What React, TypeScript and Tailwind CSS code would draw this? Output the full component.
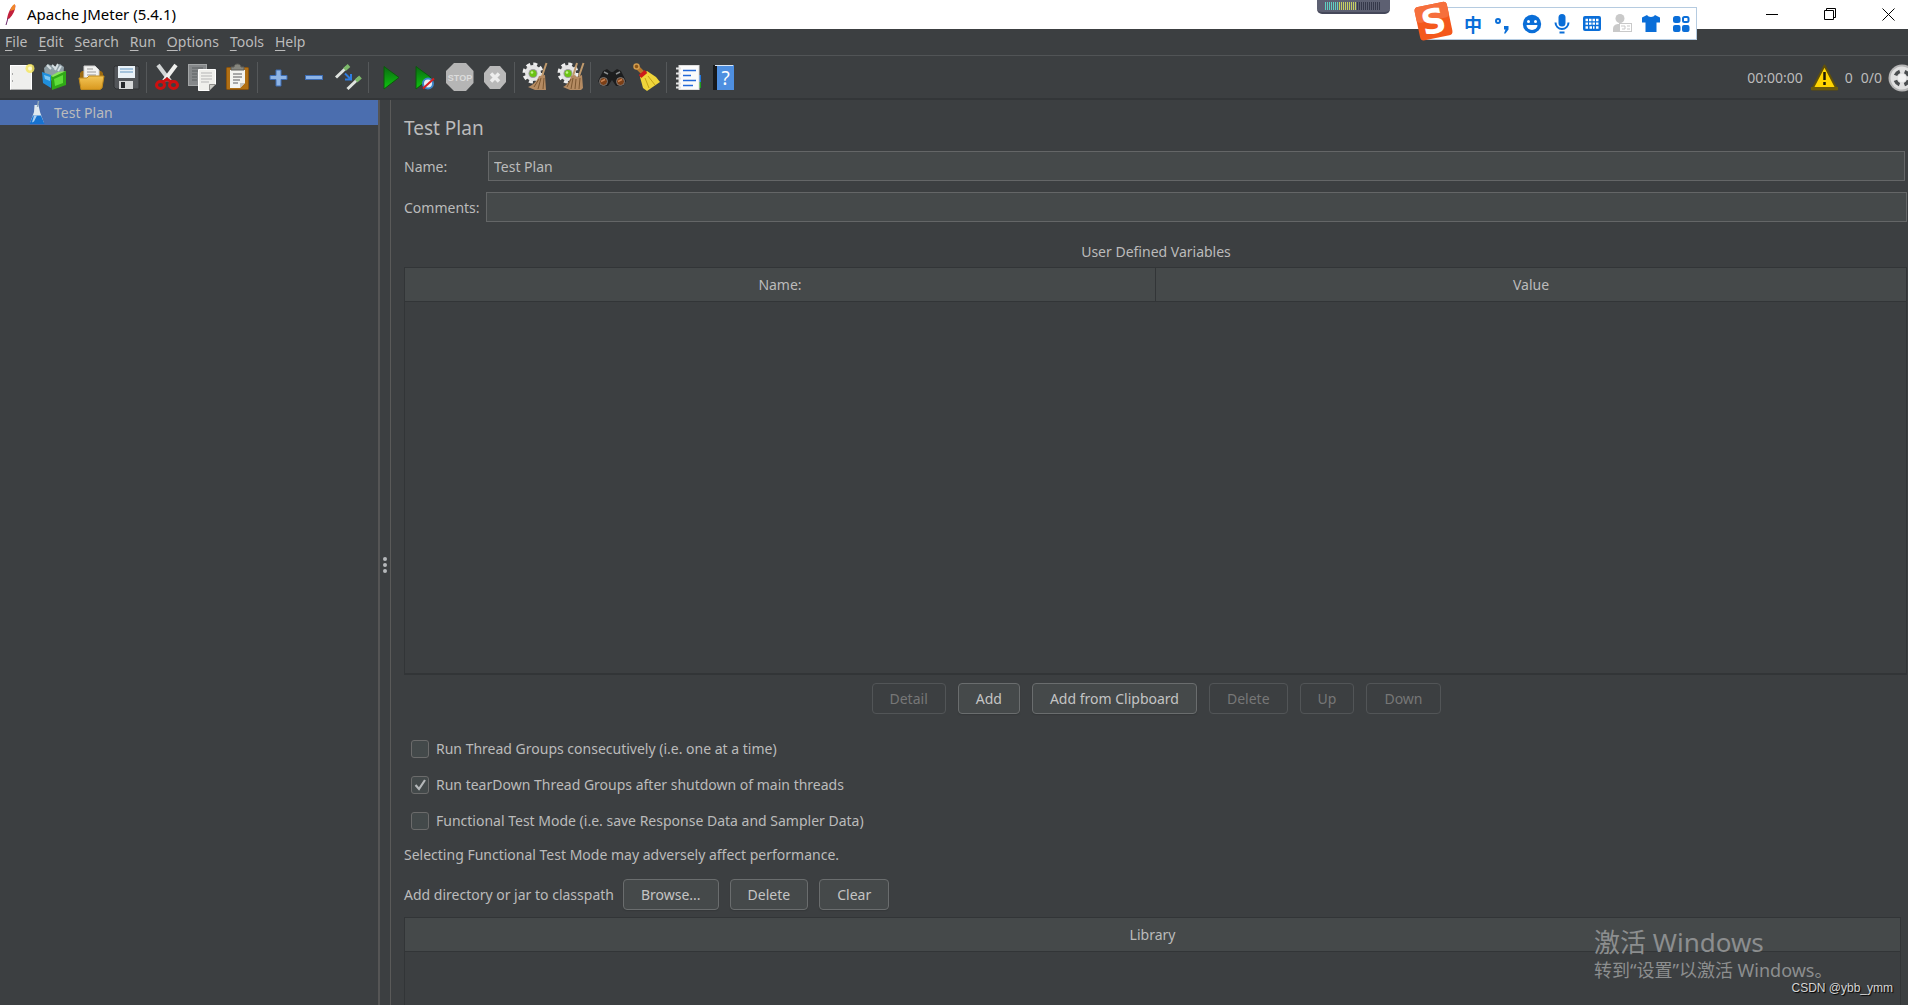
import type { ReactNode } from "react";

const menus = ["File", "Edit", "Search", "Run", "Options", "Tools", "Help"];

const gear = (
  <>
    <circle cx="14" cy="14" r="8" fill="#e4e4e4" />
    <circle cx="14" cy="14" r="9" fill="none" stroke="#efefef" strokeWidth="3" strokeDasharray="4 3.070" />
    <circle cx="14" cy="14.500" r="4.500" fill="#9a9a9a" />
    <circle cx="14" cy="14.500" r="3.500" fill="#6cc314" />
    <circle cx="13" cy="13.500" r="1.300" fill="#c0f58a" />
  </>
);

const play = (x: number) => (
  <path d={`M${x} 7.5 L${x + 15} 18.5 L${x} 30 Z`} fill="url(#green)" stroke="#0b5a0b" strokeWidth="1" />
);

const tools: { name: string; icon: ReactNode; sep?: boolean }[] = [
  {
    name: "New",
    icon: (
      <>
        <rect x="5.500" y="6.500" width="21" height="24" fill="#efefed" stroke="#fff" />
        <path d="M7.500 14v2M7.500 21v2M5.500 30.500h21" stroke="#a9a9a9" />
        <circle cx="25" cy="9.500" r="4.500" fill="#f5e663" opacity=".85" />
        <circle cx="25" cy="9.500" r="2" fill="#fffbd0" />
      </>
    ),
  },
  {
    name: "Templates",
    icon: (
      <>
        <path d="M4 9l4-4 6 3 6-3 4 3-1 11-9 4-9-6z" fill="#8e9ea5" />
        <path d="M7 6l4 4M12 6l4 4M18 5l-3 6M21 7l-3 5" stroke="#d5dfe2" strokeWidth="2" />
        <path d="M2 13l9 3v13l-8-5z" fill="#1f8fdc" />
        <path d="M4 16l6 2v4l-5-2z" fill="#7cc6f2" />
        <path d="M11 17l15-5v14l-14 5z" fill="#2fa816" />
        <path d="M11 17l7-4 8-1-13 6z" fill="#8be35f" />
        <path d="M14 20l9-4v8l-8 3z" fill="#5fdd3a" />
      </>
    ),
  },
  {
    name: "Open",
    icon: (
      <>
        <path d="M5 14l2-2h19l2 2v8H5z" fill="#9c6a10" />
        <path d="M9 7h11l4 4v9H9z" fill="#f2f2f0" stroke="#cfcfcf" />
        <path d="M12 10h6M12 13h9M12 16h9" stroke="#9a9a9a" />
        <path d="M4 19h8l2-2h15l-2 12-2 1.500H6z" fill="url(#folder)" stroke="#c08a1c" />
      </>
    ),
  },
  {
    name: "Save",
    icon: (
      <>
        <path d="M5 7h23l1 1v22H6l-2-2V8z" fill="#53565a" stroke="#2e3033" />
        <rect x="8" y="7" width="17" height="12" fill="#e9f1f7" />
        <path d="M10 10h13M10 13h13" stroke="#8fb4d3" strokeWidth="1.500" />
        <rect x="9" y="22" width="14" height="8" fill="#d5d7d8" />
        <rect x="11" y="23" width="4" height="6" fill="#25282b" />
      </>
    ),
  },
  {
    name: "Cut",
    sep: true,
    icon: (
      <>
        <path d="M7 6l12 16" stroke="#d3d6d6" strokeWidth="4" />
        <path d="M25 6L13 22" stroke="#f0f0ee" strokeWidth="4" />
        <circle cx="16" cy="19" r="1" fill="#777" />
        <ellipse cx="9.500" cy="26" rx="4" ry="3.500" fill="none" stroke="#cc1010" strokeWidth="3" />
        <ellipse cx="22.500" cy="26" rx="4" ry="3.500" fill="none" stroke="#cc1010" strokeWidth="3" />
        <path d="M12 23l4-3 4 3" fill="none" stroke="#cc1010" strokeWidth="3" />
      </>
    ),
  },
  {
    name: "Copy",
    icon: (
      <>
        <rect x="2.500" y="5.500" width="18" height="21" fill="#85888a" stroke="#a2a5a6" />
        <path d="M6 9h11M6 12h11M6 15h5M6 18h5M6 21h5" stroke="#5d6062" />
        <path d="M12.500 10.500h17v15l-6 6h-11z" fill="#f0f0ec" stroke="#fff" />
        <path d="M15 14h11M15 17h11M15 20h11M15 23h8" stroke="#b5b5b5" />
        <path d="M23.500 31.500v-6h6z" fill="#c9c9c4" stroke="#8d8d8a" />
      </>
    ),
  },
  {
    name: "Paste",
    icon: (
      <>
        <rect x="5.500" y="8.500" width="22" height="22" rx="1" fill="#b06f14" stroke="#8a520c" />
        <path d="M9 11h15v13l-5 5H9z" fill="#f3f3f0" />
        <path d="M12 15h9M12 18h9M12 21h7M12 24h5" stroke="#8e8e8e" strokeWidth="1.500" />
        <path d="M19 29v-5h5z" fill="#c4c4c0" />
        <path d="M10 11V8h3c0-4 7-4 7 0h3v3z" fill="#85867f" stroke="#5c5d58" />
      </>
    ),
  },
  {
    name: "Expand All",
    sep: true,
    icon: <path d="M14 11h5v5.500h6v4h-6V27h-5v-6.500H8v-4h6z" fill="#8db4e6" stroke="#3c6cb4" />,
  },
  {
    name: "Collapse All",
    icon: <rect x="8.500" y="16.500" width="17" height="4" fill="#8db4e6" stroke="#3c6cb4" />,
  },
  {
    name: "Toggle",
    icon: (
      <>
        <path d="M4 18.500L15 8" stroke="#dfe3df" strokeWidth="3" />
        <path d="M12.500 10.500L17 6.500" stroke="#7cb86a" strokeWidth="4" />
        <path d="M15.500 30L27 19" stroke="#dfe3df" strokeWidth="3" />
        <path d="M24 22l4.500-4" stroke="#7cb86a" strokeWidth="4" />
        <path d="M13 14.500l5.500 5.500M19 15v5.500h-6" stroke="#2f7de0" strokeWidth="2" fill="none" />
      </>
    ),
  },
  { name: "Start", sep: true, icon: play(11) },
  {
    name: "Start no pauses",
    icon: (
      <>
        {play(8)}
        <circle cx="20" cy="24.500" r="5" fill="#e6eef6" stroke="#3d86c9" strokeWidth="2" />
        <path d="M15 29.500l11-10" stroke="#d81e1e" strokeWidth="2" />
      </>
    ),
  },
  {
    name: "Stop",
    icon: (
      <>
        <path d="M11 4h12l7.500 8v12L23 32H11l-8-8V12z" fill="#b5b5b5" />
        <text x="17" y="22" textAnchor="middle" fontFamily="Liberation Sans" fontWeight="700" fontSize="9" fill="#dcdcdc">
          STOP
        </text>
      </>
    ),
  },
  {
    name: "Shutdown",
    icon: (
      <>
        <path d="M12 7h10l6 7v9l-6 7H12l-6-7v-9z" fill="#b9b9b9" />
        <path d="M13 14.500l8 8M21 14.500l-8 8" stroke="#ededed" strokeWidth="3.500" />
      </>
    ),
  },
  {
    name: "Clear",
    sep: true,
    icon: (
      <>
        {gear}
        <path d="M27.500 4L23 17" stroke="#c09a6c" strokeWidth="2" />
        <path d="M20 17l6-1 1 15H16l-7-3c5-2 9-6 11-11z" fill="#b58b62" />
        <path d="M20 20l-5 8M22 19l-3 11M25 19l-1 11" stroke="#7c5731" />
      </>
    ),
  },
  {
    name: "Clear All",
    icon: (
      <>
        {gear}
        <path d="M23 4l-4 13M29.500 4L25 17" stroke="#c09a6c" strokeWidth="2" />
        <path d="M17 17l4-1 2 2 5-2 1 13-2 2H16l-7-3c4-2 7-6 8-11z" fill="#b58b62" />
        <path d="M17 20l-4 8M19 19l-2 11M22 20l-1 10M26 19l-1 11" stroke="#7c5731" />
      </>
    ),
  },
  {
    name: "Search",
    sep: true,
    icon: (
      <>
        <path d="M8 12l4-2 4 3h2l4-3 4 2 5 10-3 5h-7l-4-6-4 6H6l-3-5z" fill="#1c1d1e" />
        <path d="M9 13l4 2M25 13l-4 2" stroke="#8a8d8f" strokeWidth="1.500" />
        <circle cx="8.500" cy="22.500" r="4" fill="#7c3f16" stroke="#777" />
        <circle cx="25.500" cy="22.500" r="4" fill="#7c3f16" stroke="#777" />
        <path d="M6 22.500l4-2M23 22.500l4-2" stroke="#c98250" strokeWidth="1.500" />
      </>
    ),
  },
  {
    name: "Reset Search",
    icon: (
      <>
        <path d="M7 8l7 7" stroke="#b5772b" strokeWidth="4" strokeLinecap="round" />
        <circle cx="6.500" cy="7.500" r="2.500" fill="#8b5516" stroke="#d09a4c" strokeWidth="1.500" />
        <path d="M10 18l7-6 9 6 4 5-13 9-4-3z" fill="#efd53a" />
        <path d="M15 19l4 10M18 17l7 9" stroke="#c3a116" />
        <path d="M10 17.500l6-5" stroke="#cc1a1a" strokeWidth="4" />
      </>
    ),
  },
  {
    name: "Function Helper",
    sep: true,
    icon: (
      <>
        <path d="M26 16h4v7h-4z" fill="#2277dd" />
        <path d="M26 23h4v6h-4z" fill="#1f9c1f" />
        <rect x="8" y="6.500" width="20" height="24" fill="#fbfbfb" stroke="#dedede" />
        <path d="M5 9.500h5M5 14.500h5M5 19.500h5M5 24.500h5M5 28.500h5" stroke="#e4e4e4" strokeWidth="2" />
        <path d="M12 11.500h13M12 16.500h8M12 21.500h13M12 26.500h10" stroke="#2268d8" strokeWidth="1.500" />
      </>
    ),
  },
  {
    name: "Help",
    icon: (
      <>
        <path d="M7 6h5v25H7z" fill="#17191b" />
        <rect x="11" y="6" width="17" height="25" fill="#4e8fe0" />
        <path d="M9 6.500h18" stroke="#dbe7f5" />
        <text x="19.500" y="26" textAnchor="middle" fontFamily="Noto Sans" fontSize="19" fill="#fff">
          ?
        </text>
      </>
    ),
  },
];

const imeIcons: { name: string; icon: ReactNode }[] = [
  {
    name: "Punctuation",
    icon: (
      <>
        <circle cx="5" cy="7" r="2" fill="none" stroke="#0a6ed8" strokeWidth="2" />
        <path d="M11 12h4.500v3.500l-3 4h-1.500l1.500-4H11z" fill="#0a6ed8" />
      </>
    ),
  },
  {
    name: "Emoji",
    icon: (
      <>
        <circle cx="10" cy="10" r="9.200" fill="#0a6ed8" />
        <circle cx="6.500" cy="7.500" r="1.500" fill="#fff" />
        <circle cx="13.500" cy="7.500" r="1.500" fill="#fff" />
        <path d="M4.500 11h11a5.500 5 0 0 1-11 0z" fill="#fff" />
      </>
    ),
  },
  {
    name: "Voice",
    icon: (
      <>
        <rect x="6.500" y="0" width="7" height="12.500" rx="3.500" fill="#0a6ed8" />
        <path d="M3.500 8.500a6.500 6.500 0 0 0 13 0M7.500 18.500h5" fill="none" stroke="#0a6ed8" strokeWidth="2" />
      </>
    ),
  },
  {
    name: "Keyboard",
    icon: (
      <>
        <rect x="1" y="2" width="18" height="15" rx="2" fill="#0a6ed8" />
        <path d="M3.500 6h13M3.500 9.700h13M3.500 13.500h3M7.500 13.500h5M14 13.500h2.500" stroke="#fff" strokeWidth="2.300" strokeDasharray="2.500 1" />
      </>
    ),
  },
  {
    name: "Account",
    icon: (
      <>
        <circle cx="8" cy="4.500" r="4.500" fill="#c9c9c9" />
        <path d="M1 18v-3c0-4 3-5 6-5h3v8z" fill="#c9c9c9" />
        <rect x="7.500" y="9.500" width="12" height="8" fill="#fff" stroke="#c9c9c9" />
        <path d="M9 12h4v3h-3M15 12h3M15 15h3" fill="none" stroke="#c9c9c9" />
      </>
    ),
  },
  {
    name: "Skin",
    icon: <path d="M1 3.500L6 1c1.500 2.500 6.500 2.500 8 0l5 2.500v5h-3.500V18h-11V8.500H1z" fill="#0a6ed8" />,
  },
  {
    name: "Toolbox",
    icon: (
      <>
        <rect x="2" y="2" width="7.500" height="7" rx="2.500" fill="#0a6ed8" />
        <rect x="2" y="11" width="7.500" height="7" rx="2" fill="#0a6ed8" />
        <rect x="11" y="11" width="7.500" height="7" rx="2" fill="#0a6ed8" />
        <rect x="12" y="3" width="5.500" height="5" rx="1.500" fill="none" stroke="#0a6ed8" strokeWidth="2" />
      </>
    ),
  },
];

const options = [
  { label: "Run Thread Groups consecutively (i.e. one at a time)", checked: false },
  { label: "Run tearDown Thread Groups after shutdown of main threads", checked: true },
  { label: "Functional Test Mode (i.e. save Response Data and Sampler Data)", checked: false },
];

function Btn({ children, disabled }: { children: ReactNode; disabled?: boolean }) {
  return (
    <button
      disabled={disabled}
      className="h-[31px] rounded-[4px] border border-[#6a6d6e] bg-[#45494a] px-[17px] pt-px text-[#c4c4c4] shadow-[0_1px_1px_#35383a] disabled:border-[#525557] disabled:bg-transparent disabled:text-[#777777] disabled:shadow-none"
    >
      {children}
    </button>
  );
}

function TitleBar() {
  return (
    <header className="flex h-[29px] shrink-0 items-center bg-white text-black">
      <svg width="14" height="22" viewBox="0 0 14 22" className="ml-1" aria-hidden="true">
        <path d="M10.500 1c-4 2-6.500 8-7.500 14l2.500-.500c3.500-4 6-8.500 6-13z" fill="#c2203c" />
        <path d="M11 0c-3 1-4 4-5 7l5-1.500z" fill="#f0862a" />
        <path d="M4 14l-2 7" stroke="#6d2a6c" />
      </svg>
      <h1 className="ml-[9px] text-[15px]">Apache JMeter (5.4.1)</h1>
      <div className="ml-auto flex gap-[18px]">
        <button aria-label="Minimize" className="flex h-7 w-10 items-center justify-center">
          <svg width="13" height="13" fill="none" stroke="#000"><path d="M0 6.500h12" /></svg>
        </button>
        <button aria-label="Restore" className="flex h-7 w-10 items-center justify-center">
          <svg width="13" height="13" fill="none" stroke="#000"><path d="M.5 2.500h9v9h-9zM2.500 2.500v-2h9v9h-2" /></svg>
        </button>
        <button aria-label="Close" className="flex h-7 w-10 items-center justify-center">
          <svg width="13" height="13" fill="none" stroke="#000"><path d="M.5.5l12 12M12.500.5l-12 12" /></svg>
        </button>
      </div>
    </header>
  );
}

function Toolbar() {
  return (
    <div className="flex h-[45px] shrink-0 items-center overflow-hidden border-t border-b-2 border-t-[#515456] border-b-[#333638] pl-[5px]">
      {tools.map((t) => (
        <div key={t.name} className="flex items-center">
          {t.sep && <span className="mr-1 ml-px h-[31px] w-px bg-[#55585a]" />}
          <button aria-label={t.name}>
            <svg width="35" height="36" viewBox="0 0 35 36" fill="none">{t.icon}</svg>
          </button>
        </div>
      ))}
      <div className="-mr-2 ml-auto flex shrink-0 items-center pt-px">
        <span>00:00:00</span>
        <svg width="27" height="27" viewBox="0 0 27 27" className="mr-[7px] ml-2" role="img" aria-label="Log errors">
          <path d="M13.500 1.500L26 25.500H1z" fill="#ffd500" stroke="#5f4f0a" strokeWidth="2" strokeLinejoin="round" />
          <path d="M0 24.500h27" stroke="#6b5a0a" strokeWidth="3" />
          <path d="M13.500 8v8M13.500 18v3" stroke="#1c1a08" strokeWidth="2.500" />
        </svg>
        <span>0</span>
        <span className="ml-2">0/0</span>
        <svg width="28" height="28" viewBox="0 0 28 28" className="ml-1.5" aria-hidden="true">
          <circle cx="14" cy="14" r="13.500" fill="#b5b5b5" />
          <circle cx="14" cy="14" r="11.500" fill="#e0e0e0" />
          <circle cx="14" cy="14" r="7" fill="none" stroke="#4a4d4f" strokeWidth="3.500" strokeDasharray="6 5" strokeDashoffset="-2.500" />
          <circle cx="14" cy="14" r="4" fill="#f2f2f2" />
        </svg>
      </div>
    </div>
  );
}

function InputMethodBar() {
  return (
    <div className="absolute top-[7px] right-[211px] flex h-[33px] w-[274px] items-center border border-[#b5cbe0] bg-white pl-[34px]">
      <svg width="42" height="42" viewBox="0 0 42 42" className="absolute -top-2 -left-[11px] overflow-visible" aria-hidden="true">
        <g transform="rotate(-12 21 21)">
          <rect x="4" y="4" width="33" height="34" rx="4" fill="#f4581c" />
          <rect x="4" y="4" width="33" height="16" rx="4" fill="#f66f3c" />
          <text x="20.500" y="33" textAnchor="middle" fontFamily="DejaVu Sans" fontWeight="700" fontSize="34" fill="#fff">
            S
          </text>
        </g>
      </svg>
      <button aria-label="Chinese" className="w-[30px] font-['Noto_Sans_CJK_SC',sans-serif] text-lg leading-5 font-bold text-[#0a6ed8]">中</button>
      {imeIcons.map((i) => (
        <button key={i.name} aria-label={i.name} className="flex w-[30px] justify-center">
          <svg width="20" height="20" viewBox="0 0 20 20">{i.icon}</svg>
        </button>
      ))}
    </div>
  );
}

export default function App() {
  return (
    <div className="relative flex h-screen flex-col overflow-hidden bg-[#3c3f41] font-['Noto_Sans',sans-serif] text-sm text-[#bbbbbb]">
      <svg width="0" height="0" className="absolute" aria-hidden="true">
        <linearGradient id="green" x1="0" y1="0" x2="0" y2="1">
          <stop offset="0" stopColor="#0a6a12" />
          <stop offset="1" stopColor="#0fc60f" />
        </linearGradient>
        <linearGradient id="folder" x1="0" y1="0" x2="0" y2="1">
          <stop offset="0" stopColor="#f3c657" />
          <stop offset="1" stopColor="#d9981e" />
        </linearGradient>
      </svg>

      <TitleBar />

      {/* Menu bar */}
      <nav className="flex h-[26px] shrink-0 items-center gap-[11px] pl-[5px]">
        {menus.map((m) => (
          <button key={m}>
            <span className="underline underline-offset-3">{m[0]}</span>
            {m.slice(1)}
          </button>
        ))}
      </nav>

      <Toolbar />

      <div className="flex min-h-0 flex-1">
        {/* Test plan tree */}
        <aside className="w-[378px] shrink-0">
          <button className="flex h-[25px] w-full items-center bg-[#4b6eaf] pl-[29px]">
            <svg width="16" height="24" viewBox="0 0 16 24" aria-hidden="true">
              <path d="M5.500 4h4l1.500 7 4 11H1l4-11z" fill="#dfe8ee" />
              <path d="M4 14.500h8L15.500 23H.5z" fill="#1672d0" />
              <path d="M5 14.500h3l-3 6-2 1z" fill="#a9d0f2" />
              <path d="M9.500 0l-1 6" stroke="#8fa6b8" strokeWidth="1.500" />
            </svg>
            <span className="ml-[9px] pt-px">Test Plan</span>
          </button>
        </aside>

        {/* Splitter */}
        <div className="flex w-[13px] shrink-0 flex-col items-center justify-center gap-[2px] border-r border-l-2 border-r-[#5a5a59] border-l-[#555555] pt-6">
          <i className="size-1 rounded-full bg-[#b5b8ba]" />
          <i className="size-1 rounded-full bg-[#b5b8ba]" />
          <i className="size-1 rounded-full bg-[#b5b8ba]" />
        </div>

        <main className="flex min-w-0 flex-1 flex-col pt-3 pl-[13px]">
          <h2 className="h-8 text-[19px] leading-8">Test Plan</h2>

          <div className="mt-[7px] mr-[3px] flex h-[30px] items-center">
            <label htmlFor="name" className="w-[84px] pt-0.5">Name:</label>
            <input id="name" defaultValue="Test Plan" className="h-full min-w-0 flex-1 border border-[#646667] bg-[#45494a] px-[5px] outline-none" />
          </div>
          <div className="mt-[11px] mr-px flex h-[30px] items-center">
            <label htmlFor="comments" className="w-[82px] pt-0.5">Comments:</label>
            <input id="comments" className="h-full min-w-0 flex-1 border border-[#646667] bg-[#45494a] px-[5px] outline-none" />
          </div>

          <p className="mt-5 text-center leading-5">User Defined Variables</p>
          <div className="mt-[5px] mr-px min-h-0 flex-1 border border-[#323537] border-b-2">
            <table className="w-full table-fixed border-collapse bg-[#45494a]" aria-label="User Defined Variables">
              <thead>
                <tr className="h-[33px] border-b border-[#323537]">
                  <th className="border-r border-[#323537] pt-0.5 font-normal">Name:</th>
                  <th className="pt-0.5 font-normal">Value</th>
                </tr>
              </thead>
            </table>
          </div>

          <div className="mt-2 flex justify-center gap-3">
            <Btn disabled>Detail</Btn>
            <Btn>Add</Btn>
            <Btn>Add from Clipboard</Btn>
            <Btn disabled>Delete</Btn>
            <Btn disabled>Up</Btn>
            <Btn disabled>Down</Btn>
          </div>

          <div className="mt-[17px] ml-[7px]">
            {options.map((o) => (
              <label key={o.label} className="flex h-9 items-center gap-[7px]">
                <span className="relative size-[18px]">
                  <input
                    type="checkbox"
                    defaultChecked={o.checked}
                    className="peer block size-[18px] appearance-none rounded-[3px] border border-[#6b6b6b] bg-[#43494a]"
                  />
                  <svg viewBox="0 0 18 18" className="pointer-events-none absolute inset-0 hidden peer-checked:block" fill="none">
                    <path d="M4.500 9l3.500 4 6-9" stroke="#b5b8ba" strokeWidth="2.200" />
                  </svg>
                </span>
                {o.label}
              </label>
            ))}
          </div>
          <p className="mt-1 leading-6">Selecting Functional Test Mode may adversely affect performance.</p>

          <div className="mt-3 flex items-center">
            <span className="mr-[9px]">Add directory or jar to classpath</span>
            <div className="flex gap-[11px]">
              <Btn>Browse...</Btn>
              <Btn>Delete</Btn>
              <Btn>Clear</Btn>
            </div>
          </div>

          <div className="mt-[7px] mr-[7px] h-[88px] shrink-0 border border-b-0 border-[#323537]">
            <table className="w-full border-collapse bg-[#45494a]" aria-label="Classpath">
              <thead>
                <tr className="h-[33px] border-b border-[#323537]">
                  <th className="pt-0.5 font-normal">Library</th>
                </tr>
              </thead>
            </table>
          </div>
        </main>
      </div>

      {/* Desktop meter and input method bar floating over the window */}
      <div className="absolute top-0 right-[518px] flex h-[14px] w-[73px] gap-px rounded-b-[5px] border-b-2 border-[#45485a] bg-[#5d6072] px-2 pt-[2px]">
        {Array.from({ length: 28 }, (_, i) => (
          <i key={i} className={`h-2 w-px ${i < 7 ? "bg-[#5fd0c0]" : i < 16 ? "bg-[#c5d060]" : "bg-[#35384a]"}`} />
        ))}
      </div>
      <InputMethodBar />

      {/* Activation watermark */}
      <div className="pointer-events-none absolute right-[74px] bottom-[23px] w-60 font-['Noto_Sans','Noto_Sans_CJK_SC',sans-serif] whitespace-nowrap text-[#8c8e8f]">
        <p className="text-[26px] leading-8">激活 Windows</p>
        <p className="text-lg leading-6">转到“设置”以激活 Windows。</p>
      </div>
      <p className="pointer-events-none absolute right-[15px] bottom-[7px] font-['Liberation_Sans',sans-serif] text-xs leading-5 text-[#d5d5d5] [text-shadow:1px_1px_1px_#000]">
        CSDN @ybb_ymm
      </p>
    </div>
  );
}
